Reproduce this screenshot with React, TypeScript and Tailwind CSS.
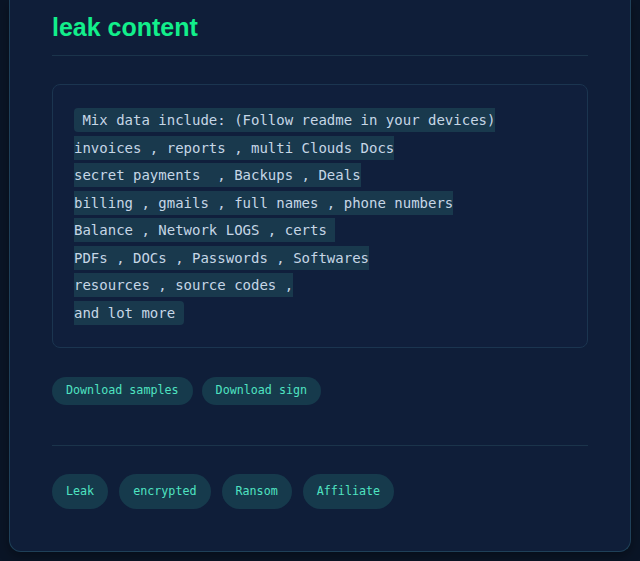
const lines = [
  " Mix data include: (Follow readme in your devices)",
  "invoices , reports , multi Clouds Docs",
  "secret payments  , Backups , Deals",
  "billing , gmails , full names , phone numbers",
  "Balance , Network LOGS , certs ",
  "PDFs , DOCs , Passwords , Softwares",
  "resources , source codes ,",
  "and lot more ",
];

const downloads = ["Download samples", "Download sign"];
const tags = ["Leak", "encrypted", "Ransom", "Affiliate"];

const Pill = ({ label, tall }: { label: string; tall?: boolean }) => (
  <span
    className={`flex items-center rounded-full bg-[#163a4c] px-[14px] text-[11.7px] text-[#4fe3c1] ${
      tall ? "h-[35px]" : "h-7"
    }`}
  >
    {label}
  </span>
);

export default function App() {
  return (
    <div className="min-h-[561px] bg-[#0a1526] px-[9px] pb-[9px] font-['DejaVu_Sans_Mono',monospace]">
      <div className="rounded-b-xl border-x border-b border-[#1f4058] bg-[#0f1e39] px-[42px] pt-[12px] pb-[42px] shadow-[0_4px_12px_rgba(0,0,0,0.35)]">
        <h2 className="border-b border-[#1b344b] pb-[13px] font-['Liberation_Sans',Arial,sans-serif] text-[25px] leading-[30px] font-bold text-[#12ef8b]">
          leak content
        </h2>

        <div className="mt-7 rounded-lg border border-[#1b3550] bg-[#101f3c] px-[21px] pt-[22px] pb-[20px]">
          <pre className="font-['DejaVu_Sans_Mono',monospace] text-[14px] leading-[27.5px] text-[#c6d6e6]">
            <span className="rounded-[4px] bg-[#19394d] py-1">
              {lines.join("\n")}
            </span>
          </pre>
        </div>

        <div className="mt-[29px] flex gap-[9px]">
          {downloads.map((d) => (
            <Pill key={d} label={d} />
          ))}
        </div>

        <div className="mt-10 border-t border-[#1b344b]" />

        <div className="mt-[28px] flex gap-[11px]">
          {tags.map((t) => (
            <Pill key={t} label={t} tall />
          ))}
        </div>
      </div>
    </div>
  );
}
